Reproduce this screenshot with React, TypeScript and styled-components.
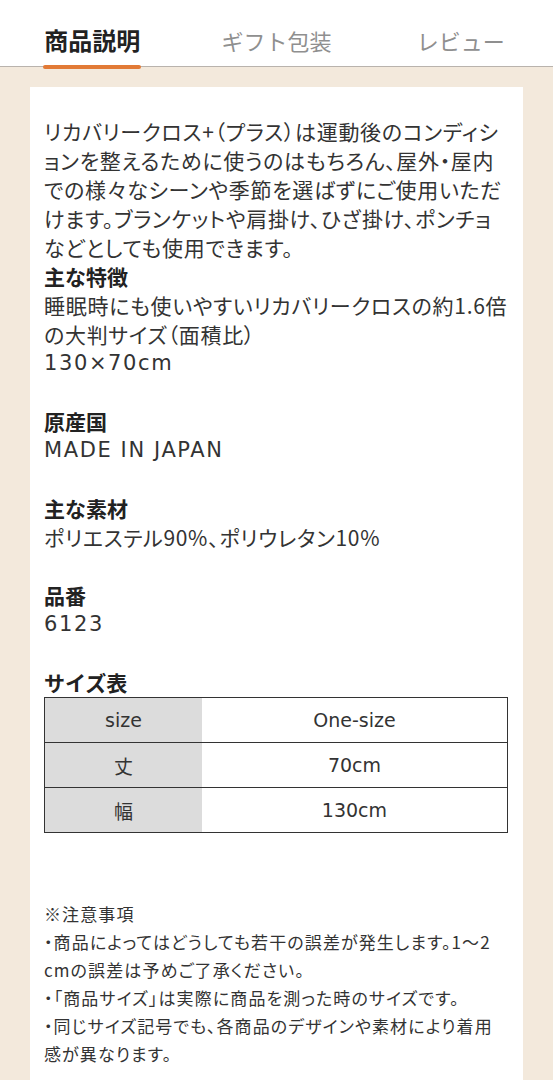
import React from 'react';
import styled, { createGlobalStyle } from 'styled-components';

const GlobalStyle = createGlobalStyle`
  html, body {
    margin: 0;
    padding: 0;
    background: #f3e9dc;
  }
  body {
    font-family: "Noto Sans CJK JP", "Noto Sans", sans-serif;
    color: #333;
  }
`

type TabProps = {
  $active?: boolean;
};

type TextProps = {
  $latin?: boolean;
};

const Page = styled.div`
  width: 553px;
  min-height: 1080px;
  background: #f3e9dc;
`

const TabBar = styled.nav`
  display: grid;
  grid-template-columns: repeat(3, 1fr);
  height: 67px;
  background: #fff;
  border-bottom: 1px solid #b9b3ad;
  box-sizing: border-box;
`

const Tab = styled.div`
  display: flex;
  justify-content: center;
  align-items: flex-end;
`

const TabLabel = styled.span<TabProps>`
  position: relative;
  display: block;
  padding-bottom: 14px;
  font-size: ${({ $active }) => ($active ? '24px' : '22px')};
  font-weight: ${({ $active }) => ($active ? 700 : 400)};
  color: ${({ $active }) => ($active ? '#222' : '#8f8f8f')};
  line-height: 24px;

  &::after {
    content: '';
    display: ${({ $active }) => ($active ? 'block' : 'none')};
    position: absolute;
    left: -1px;
    right: -1px;
    bottom: -3px;
    height: 4px;
    border-radius: 2px;
    background: #e27a36;
  }
`

const Card = styled.section`
  margin: 20px 30px 0;
  background: #fff;
  padding: 30px 15px 40px 14px;
`

const Text = styled.p<TextProps>`
  margin: 0;
  font-family: ${({ $latin }) =>
    $latin ? '"DejaVu Sans", "Noto Sans CJK JP", sans-serif' : '"Noto Sans CJK JP", sans-serif'};
  font-size: 21px;
  letter-spacing: ${({ $latin }) => ($latin ? '1.6px' : '0.7px')};
  font-feature-settings: "palt";
  line-height: 29px;
  color: #333;
`

const Heading = styled.h3`
  margin: 0;
  font-size: 21px;
  line-height: 29px;
  font-weight: 700;
  color: #222;
`

const Spacer = styled.div`
  height: 29px;
`

const SizeTable = styled.table`
  width: 100%;
  border-collapse: collapse;
  border: 1.5px solid #333;
`

const Row = styled.tr`
  height: 45px;
  border-bottom: 1.5px solid #333;
`

const LabelCell = styled.th`
  width: 34%;
  background: #dcdcdc;
  font-family: "DejaVu Sans", "Noto Sans CJK JP", sans-serif;
  font-size: 19px;
  font-weight: 400;
  color: #333;
  text-align: center;
  padding: 0;
`

const ValueCell = styled.td`
  font-family: "DejaVu Sans", "Noto Sans CJK JP", sans-serif;
  font-size: 19px;
  color: #333;
  text-align: center;
  padding: 0;
`

const Notes = styled.div`
  margin-top: 67px;
`

const Note = styled.p`
  margin: 0;
  font-size: 17px;
  line-height: 28px;
  letter-spacing: 1.1px;
  font-feature-settings: "palt";
  color: #333;
`

const tabs = ['商品説明', 'ギフト包装', 'レビュー'];

const sizes = [
  { label: 'size', value: 'One-size' },
  { label: '丈', value: '70cm' },
  { label: '幅', value: '130cm' },
];

const notes = [
  '※注意事項',
  '・商品によってはどうしても若干の誤差が発生します。1～2\u200Bcmの誤差は予めご了承ください。',
  '・「商品サイズ」は実際に商品を測った時のサイズです。',
  '・同じサイズ記号でも、各商品のデザインや素材により着用感が異なります。',
];

const App: React.FC = () => {
  return (
    <Page>
      <GlobalStyle />
      <TabBar>
        {tabs.map((tab, i) => (
          <Tab key={tab}>
            <TabLabel $active={i === 0}>{tab}</TabLabel>
          </Tab>
        ))}
      </TabBar>
      <Card>
        <Text>
          リカバリークロス+（プラス）は運動後のコンディションを整えるために使うのはもちろん、屋外・屋内での様々なシーンや季節を選ばずにご使用いただけます。ブランケットや肩掛け、ひざ掛け、ポンチョなどとしても使用できます。
        </Text>
        <Heading>主な特徴</Heading>
        <Text>睡眠時にも使いやすいリカバリークロスの約1.6倍の大判サイズ（面積比）</Text>
        <Text $latin>130×70cm</Text>
        <Spacer />
        <Heading>原産国</Heading>
        <Text $latin>MADE IN JAPAN</Text>
        <Spacer />
        <Heading>主な素材</Heading>
        <Text>ポリエステル90%、ポリウレタン10%</Text>
        <Spacer />
        <Heading>品番</Heading>
        <Text $latin>6123</Text>
        <Spacer />
        <Heading>サイズ表</Heading>
        <SizeTable>
          <tbody>
            {sizes.map((s) => (
              <Row key={s.label}>
                <LabelCell>{s.label}</LabelCell>
                <ValueCell>{s.value}</ValueCell>
              </Row>
            ))}
          </tbody>
        </SizeTable>
        <Notes>
          {notes.map((n) => (
            <Note key={n}>{n}</Note>
          ))}
        </Notes>
      </Card>
    </Page>
  );
}

export default App;
